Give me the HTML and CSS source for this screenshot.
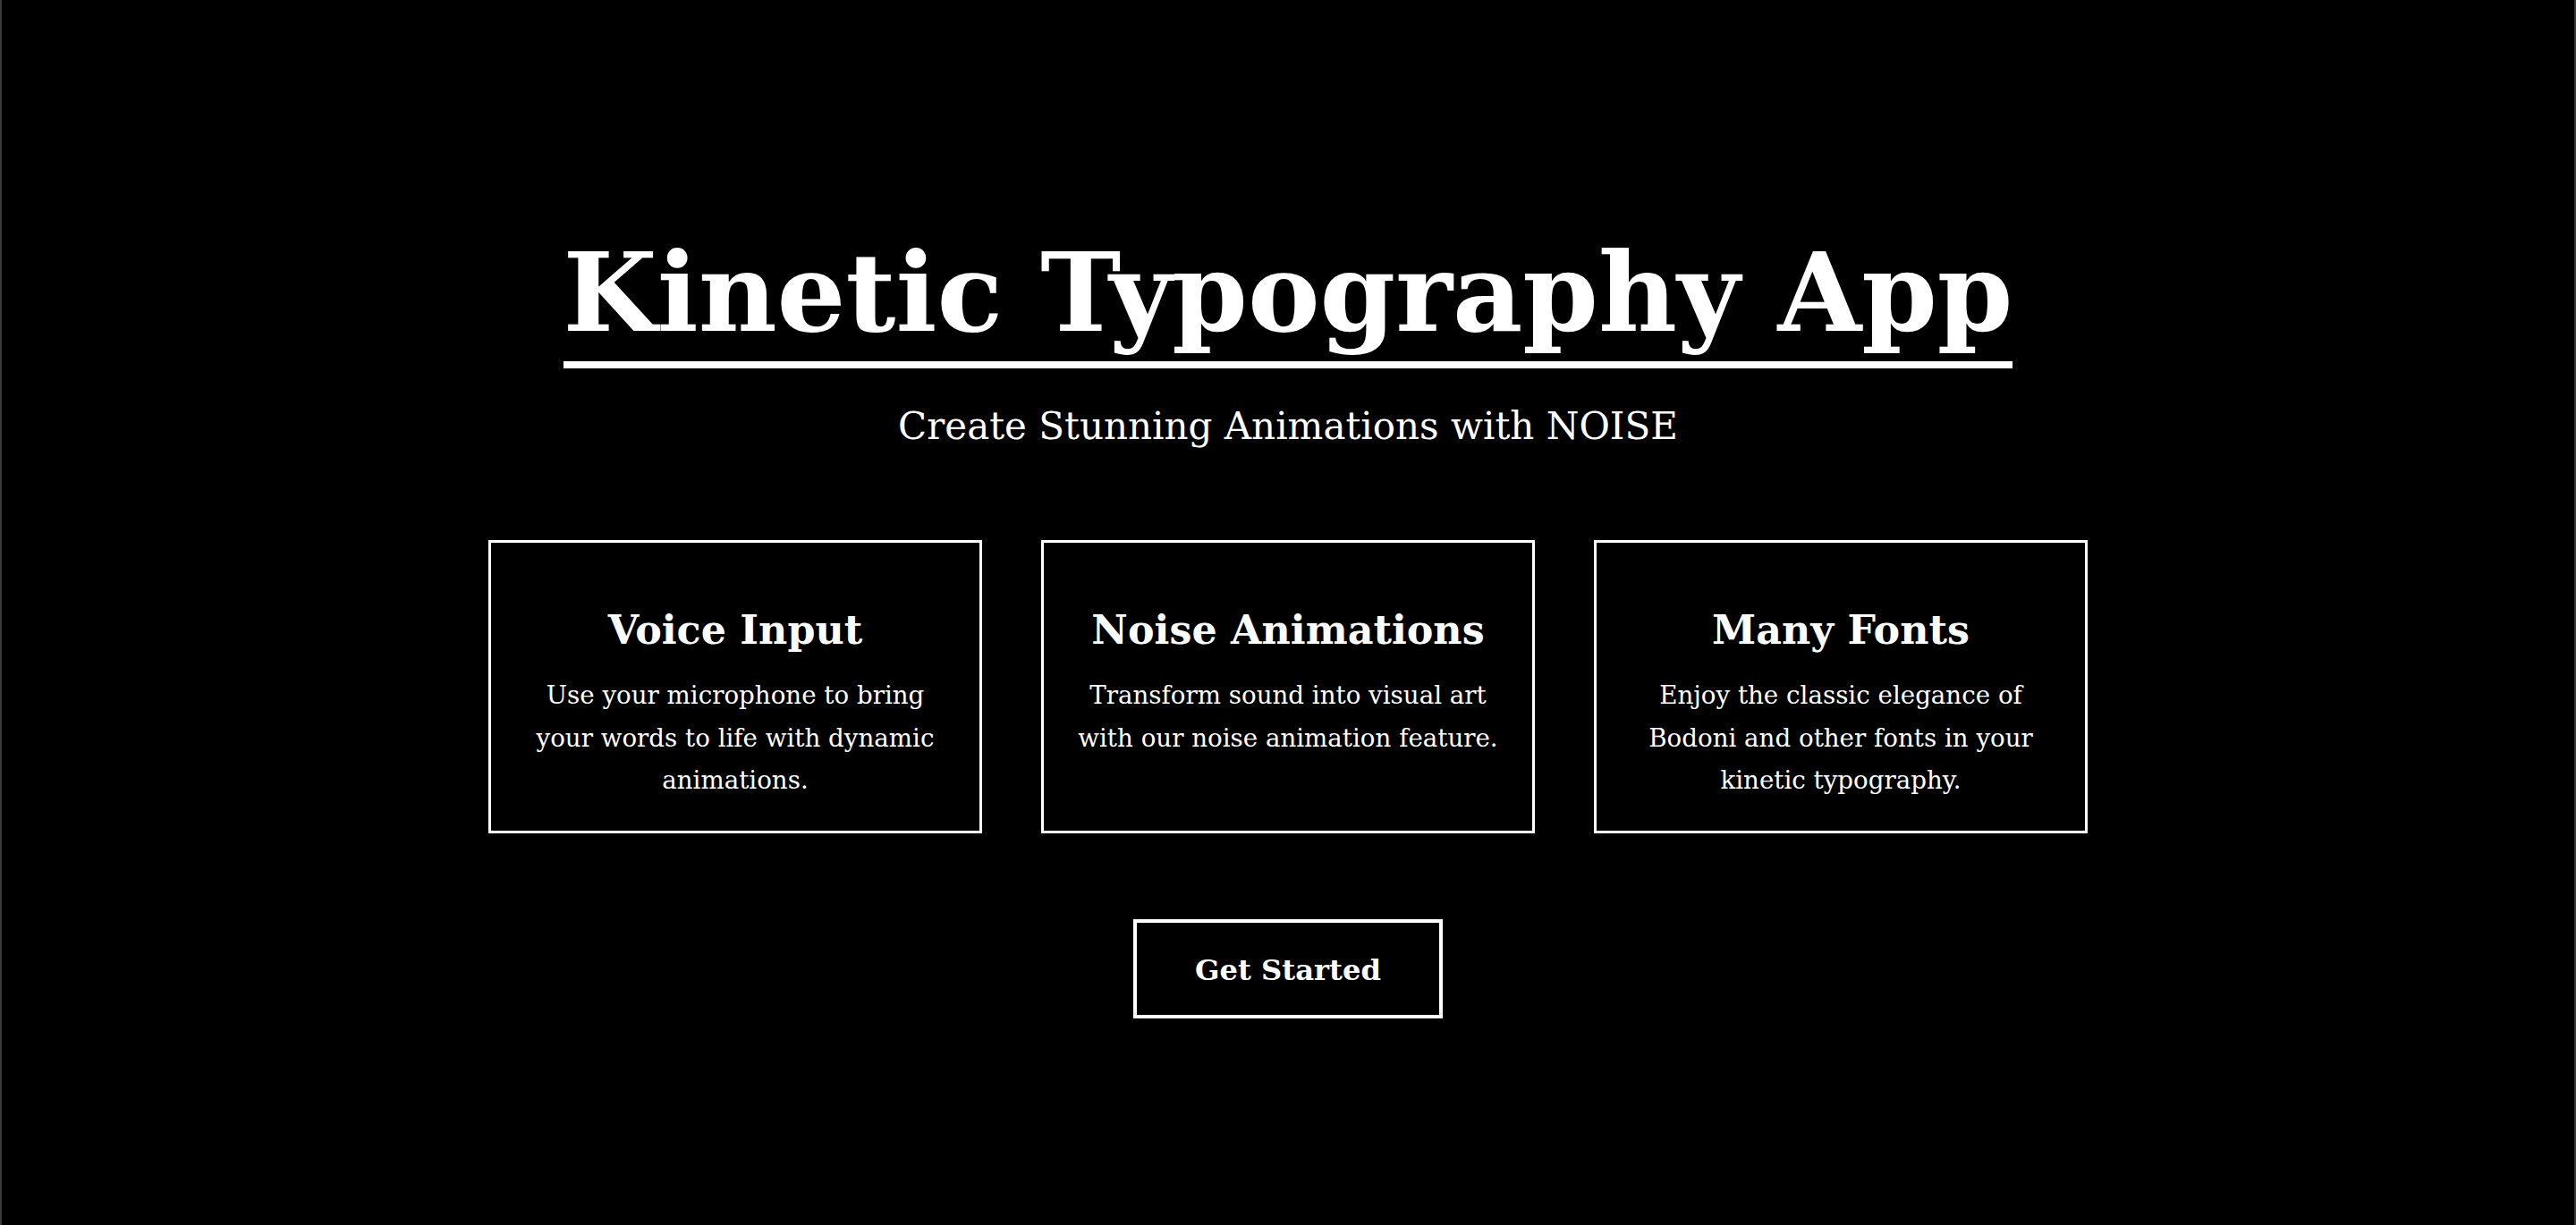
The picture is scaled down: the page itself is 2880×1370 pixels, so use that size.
FILE: index.html
```html
<!DOCTYPE html>
<html lang="en">
<head>
<meta charset="utf-8">
<title>Kinetic Typography App</title>
<link rel="stylesheet" href="styles.css">
</head>
<body>
<main class="page">
  <header class="hero">
    <h1 class="title">Kinetic Typography App</h1>
    <p class="subtitle">Create Stunning Animations with NOISE</p>
  </header>
  <section class="features">
    <article class="card">
      <h2 class="card-title">Voice Input</h2>
      <p class="card-text">Use your microphone to bring your words to life with dynamic animations.</p>
    </article>
    <article class="card">
      <h2 class="card-title">Noise Animations</h2>
      <p class="card-text">Transform sound into visual art with our noise animation feature.</p>
    </article>
    <article class="card">
      <h2 class="card-title">Many Fonts</h2>
      <p class="card-text">Enjoy the classic elegance of Bodoni and other fonts in your kinetic typography.</p>
    </article>
  </section>
  <a class="cta" href="#">Get Started</a>
</main>
</body>
</html>
```
FILE: styles.css
```css
* { box-sizing: border-box; }

html, body {
  margin: 0;
  padding: 0;
  background: #000;
}

body {
  color: #fff;
  font-family: "DejaVu Serif", "Liberation Serif", serif;
}

.page {
  min-height: 100vh;
  display: flex;
  flex-direction: column;
  align-items: center;
  padding-top: 258px;
  border-left: 2px solid #3c3c3c;
  border-right: 2px solid #3c3c3c;
}

.hero {
  display: flex;
  flex-direction: column;
  align-items: center;
}

.title {
  margin: 0;
  font-size: 121px;
  font-weight: bold;
  line-height: 139px;
  padding-bottom: 7px;
  border-bottom: 8px solid #fff;
  white-space: nowrap;
}

.subtitle {
  margin: 40px 0 0;
  font-size: 42px;
  line-height: 50px;
}

.features {
  display: flex;
  gap: 66px;
  margin-top: 102px;
}

.card {
  width: 552px;
  border: 3px solid #fff;
  padding: 32px 32px 32px;
  text-align: center;
}

.card-title {
  margin: 39px 0 23px;
  font-size: 44.4px;
  font-weight: bold;
  line-height: 53px;
}

.card-text {
  margin: 0;
  font-size: 27.7px;
  line-height: 47.5px;
}

.cta {
  margin-top: 96px;
  display: inline-block;
  border: 4px solid #fff;
  padding: 33px 65px 30px;
  color: #fff;
  text-decoration: none;
  font-size: 32.2px;
  font-weight: bold;
  line-height: 40px;
}
```
